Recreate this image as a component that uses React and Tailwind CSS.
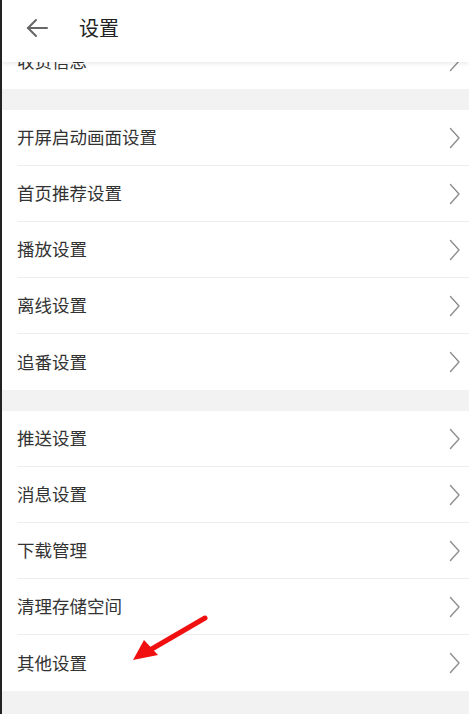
const groupA = ["开屏启动画面设置", "首页推荐设置", "播放设置", "离线设置", "追番设置"];
const groupB = ["推送设置", "消息设置", "下载管理", "清理存储空间", "其他设置"];

function Chevron() {
  return (
    <svg width="11" height="22" viewBox="0 0 11 22" fill="none" stroke="#8f8f8f" strokeWidth="1.4" strokeLinecap="round" strokeLinejoin="round">
      <path d="M1.5 1.5 10 11 1.5 20.5" />
    </svg>
  );
}

function Row({ label, last }) {
  return (
    <div className="flex h-[56px] items-center pl-[15px]">
      <div
        className={
          "flex h-full flex-1 items-center justify-between pr-[9px] " +
          (last ? "" : "border-b border-[#ededed]")
        }
      >
        <span className="text-[17.5px] text-[#333333]">{label}</span>
        <Chevron />
      </div>
    </div>
  );
}

function Group({ items }) {
  return (
    <div className="bg-white">
      {items.map((t, i) => (
        <Row key={t} label={t} last={i === items.length - 1} />
      ))}
    </div>
  );
}

export default function App() {
  return (
    <div
      className="relative h-[714px] w-[469px] overflow-hidden border-l-2 border-[#222] bg-[#f2f2f2]"
      style={{ fontFamily: '"Noto Sans CJK SC", "Noto Sans", sans-serif' }}
    >
      {/* header */}
      <div className="relative z-10 flex h-[62px] items-center bg-white pb-[6px] shadow-[0_2px_4px_rgba(0,0,0,0.08)]">
        <svg width="22" height="20" viewBox="0 0 22 20" className="ml-[24px]" fill="none" stroke="#666" strokeWidth="2" strokeLinecap="round">
          <path d="M2 10h19" />
          <path d="M10 2 2 10l8 8" />
        </svg>
        <span className="ml-[31px] text-[20px] text-[#222]">设置</span>
      </div>

      {/* scrolled row under header */}
      <div className="h-[27px] overflow-hidden bg-white">
        <div className="mt-[-29px]">
          <Row label="收货信息" last />
        </div>
      </div>

      <div className="h-[21px]" />
      <Group items={groupA} />
      <div className="h-[21px]" />
      <Group items={groupB} />

      {/* red annotation arrow */}
      <svg className="absolute left-[120px] top-[610px]" width="100" height="60" viewBox="0 0 100 60">
        <path d="M83 8 L28 40" stroke="#f01010" strokeWidth="5" strokeLinecap="round" />
        <path d="M11 50 L22 30 L36 45 Z" fill="#f01010" />
      </svg>
    </div>
  );
}
